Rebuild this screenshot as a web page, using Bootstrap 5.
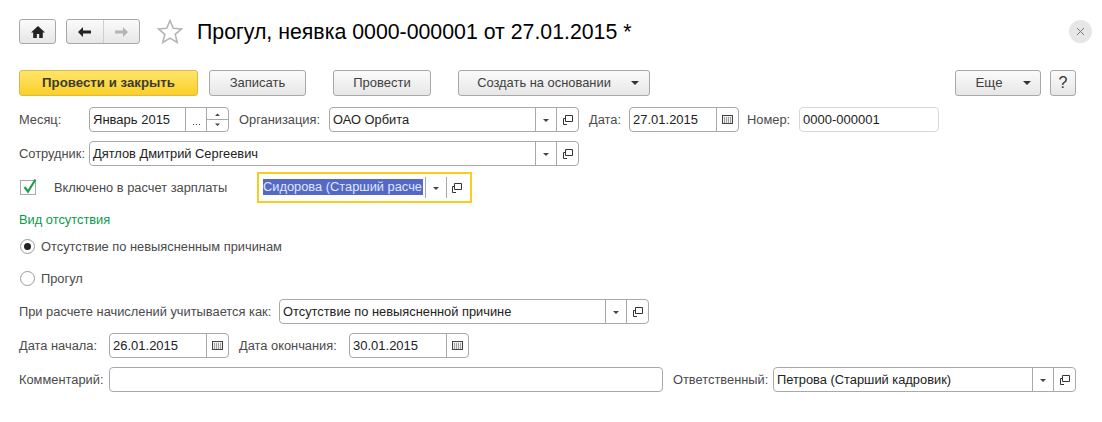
<!DOCTYPE html>
<html lang="ru"><head><meta charset="utf-8"><title>Прогул</title>
<link href="https://cdn.jsdelivr.net/npm/bootstrap@5.3.0/dist/css/bootstrap.min.css" rel="stylesheet">
<style>
html,body{height:100%;overflow:hidden}
body{font-family:"Liberation Sans",Arial,sans-serif;font-size:12.85px;color:#4a4a4a;background:#fff;line-height:15px}
.page{padding:19px 26px 0 19px}
.btn.gb{height:26px;padding:0;font-size:13px;line-height:24px;color:#3f3f3f;border:1px solid #a8a8a8;border-radius:3px;background:linear-gradient(#fbfbfb,#e6e6e6);display:flex;align-items:center;justify-content:center;flex:none}
.btn.gb.ylw{background:linear-gradient(#fde56c,#fbcf26);border-color:#e0b84a;color:#3c3c2c;font-weight:700;font-size:13.25px;width:179px}
.hdr{height:25px;margin-bottom:26px}
.b-home{width:37px;height:25px!important;margin-right:10px}
.navpair{width:74px;height:25px;border:1px solid #a8a8a8;border-radius:3px;background:linear-gradient(#fbfbfb,#e6e6e6);margin-right:17px}
.navpair>div{flex:1;display:flex;align-items:center;justify-content:center}
.navpair>div+div{border-left:1px solid #cfcfcf}
.ttl{font-size:21.3px;line-height:27px;color:#000;margin:0 0 0 14px;font-weight:400;flex:1}
.xclose{width:23px;height:23px;border-radius:50%;background:#e6e6e6;margin:1px -16px 0 0;display:flex;align-items:center;justify-content:center}
.tbar{height:26px;margin-bottom:11px}
.w1{width:97px;margin-left:11px}.w2{width:98px;margin-left:27px}.w3{width:192px;margin-left:27px}.w4{width:86px;margin-left:auto}.w5{width:26px;margin-left:9px}
.btn.gb.w3{font-size:12.9px;padding-left:8px}
.btn.gb.w5{font-size:16px;color:#333}
.caretd{width:0;height:0;border-left:4px solid transparent;border-right:4px solid transparent;border-top:4px solid #333}
.w3 .caretd{margin-left:20px}.w4 .caretd{margin-left:20px}
.btn.gb.w4{padding-left:10px;font-size:13.3px}
.frow{display:flex;align-items:center;height:25px;margin-bottom:9px}
.lbl{flex:none;white-space:nowrap}
.fld{display:flex;flex:none;height:25px;border:1px solid #a9a9a9;border-radius:4px;background:#fff;color:#222}
.fld .form-control{flex:1;min-width:0;border:0;border-radius:0;background:none;padding:0 3px;font-size:12.85px;line-height:23px;height:23px;color:#222;white-space:nowrap;overflow:hidden;box-shadow:none}
.fld .form-control.digits{font-size:13px}
.cell{flex:none;width:21px;border-left:1px solid #a9a9a9;display:flex;align-items:center;justify-content:center;position:relative}
.cell.wide{width:22px}
.tri{width:0;height:0;border-left:3px solid transparent;border-right:3px solid transparent;border-top:3px solid #444;margin-top:1px}
.l1{width:70px}.l2{width:90px;margin-left:10px}.l3{width:40px;margin-left:10px}.l4{width:52px;margin-left:8px}
.f-month{width:140px}.f-org{width:250px}.f-date{width:110px}.f-num{width:140px;border-color:#d8d8d8}
.f-emp{width:490px}
.chkrow{height:31px;margin-top:-3px;margin-bottom:0}
.chk{flex:none;width:16px;height:15px;margin-left:1px;border:1px solid #a9a9a9;background:#fdfdfd;position:relative}
.chk svg{position:absolute;left:1px;top:-3px}
.l-chk{margin-left:18px;width:203px}
.focusbox{width:215px;height:31px;border:2px solid #fbcb1e;display:flex;background:#fff;padding:3px 0 3px 4px;flex:none}
.sel{background:#5468c4;color:#dfe8ff;display:block;width:160px;height:16px;margin-top:2px;line-height:16px;overflow:hidden;white-space:nowrap}
.focusbox .c1{width:21px;margin-left:2px}.focusbox .c2{width:21px}
.grp{color:#0a9a4a;margin-top:9px;height:15px;margin-bottom:11px;line-height:15px}
.rrow{height:16px;display:flex;align-items:center}
.rrow+.rrow{margin-top:16px}
.rdo{flex:none;width:15px;height:15px;margin:0 6px 0 1px;border:1px solid #9a9a9a;border-radius:50%;background:#fff;display:flex;align-items:center;justify-content:center}
.rdo i{display:block;width:7px;height:7px;border-radius:50%;background:#222}
.radios{margin-bottom:13px}
.l5{width:260px}.f-calc{width:370px}
.l6{width:90px}.f-d1{width:120px}.l7{width:110px;margin-left:10px}
.f-cmt{width:554px}.l8{width:100px;margin-left:10px}.f-resp{width:303px}
</style></head><body>
<svg width="0" height="0" class="d-block position-absolute"><defs>
<g id="ic-open"><path d="M2.500.5h7v6h-7zM2.500 3.500h-2v6h3.500" fill="none" stroke="#333"/></g>
<g id="ic-cal"><rect x=".5" y=".5" width="10" height="8" fill="#eee" stroke="#444"/><path d="M2 3h7M2 5h7M2 7h7" stroke="#555" stroke-dasharray="1 1"/></g>
</defs></svg>
<div class="page">
<div class="hdr d-flex align-items-start">
  <button class="btn gb b-home" aria-label="home"><svg width="16" height="14" viewBox="0 0 16 14"><path d="M8 1 1 7.500h2.200V13h3.600V9h2.400v4h3.600V7.500H15z" fill="#222"/></svg></button>
  <div class="navpair d-flex">
    <div><svg width="15" height="12" viewBox="0 0 15 12"><path d="M6 1 1 6l5 5V7.500h8v-3H6z" fill="#222"/></svg></div>
    <div><svg width="15" height="12" viewBox="0 0 15 12"><path d="M9 1l5 5-5 5V7.500H1v-3h8z" fill="#b4b4b4"/></svg></div>
  </div>
  <svg width="26" height="25" viewBox="0 0 26 25" class="flex-none"><path d="M13 1.500l3.300 7.800 8.200.6-6.300 5.400 2 8.200-7.200-4.400-7.200 4.400 2-8.200L1.500 9.900l8.200-.6z" fill="#fff" stroke="#b5b5b5" stroke-width="1.600"/></svg>
  <h1 class="ttl">Прогул, неявка 0000-000001 от 27.01.2015 *</h1>
  <div class="xclose"><svg width="9" height="9" viewBox="0 0 9 9"><path d="M1 1l7 7M8 1 1 8" stroke="#777" stroke-width="1"/></svg></div>
</div>
<div class="tbar d-flex">
  <button class="btn gb ylw">Провести и закрыть</button>
  <button class="btn gb w1">Записать</button>
  <button class="btn gb w2">Провести</button>
  <button class="btn gb w3">Создать на основании<span class="caretd"></span></button>
  <button class="btn gb w4">Еще<span class="caretd"></span></button>
  <button class="btn gb w5">?</button>
</div>
<div class="frow">
  <div class="lbl l1">Месяц:</div>
  <div class="fld f-month"><div class="form-control digits">Январь 2015</div><div class="cell"><svg width="20" height="23" viewBox="0 0 20 23"><path d="M7 16.500h1M10 16.500h1M13 16.500h1" stroke="#444"/></svg></div><div class="cell wide d-block"><svg class="d-block" width="21" height="23" viewBox="0 0 21 23"><path d="M0 11.500h21" stroke="#a9a9a9"/><path d="M8 8h5l-2.500-2.500zM8 15.500h5L10.500 18z" fill="#444"/></svg></div></div>
  <div class="lbl l2">Организация:</div>
  <div class="fld f-org"><div class="form-control">ОАО Орбита</div><div class="cell"><span class="tri"></span></div><div class="cell wide"><svg width="10" height="10" viewBox="0 0 10 10"><use href="#ic-open"/></svg></div></div>
  <div class="lbl l3">Дата:</div>
  <div class="fld f-date"><div class="form-control digits">27.01.2015</div><div class="cell wide"><svg width="11" height="9" viewBox="0 0 11 9"><use href="#ic-cal"/></svg></div></div>
  <div class="lbl l4">Номер:</div>
  <div class="fld f-num"><div class="form-control digits">0000-000001</div></div>
</div>
<div class="frow">
  <div class="lbl l1">Сотрудник:</div>
  <div class="fld f-emp"><div class="form-control">Дятлов Дмитрий Сергеевич</div><div class="cell"><span class="tri"></span></div><div class="cell wide"><svg width="10" height="10" viewBox="0 0 10 10"><use href="#ic-open"/></svg></div></div>
</div>
<div class="frow chkrow">
  <div class="chk"><svg width="16" height="17" viewBox="0 0 16 17"><path d="M2.500 9l3.500 4.500L13.500 1.500" fill="none" stroke="#1e9e4a" stroke-width="2.200"/></svg></div>
  <div class="lbl l-chk">Включено в расчет зарплаты</div>
  <div class="focusbox"><span class="sel">Сидорова (Старший расче</span><div class="cell c1"><span class="tri"></span></div><div class="cell c2"><svg width="10" height="10" viewBox="0 0 10 10"><use href="#ic-open"/></svg></div></div>
</div>
<div class="grp">Вид отсутствия</div>
<div class="radios">
  <div class="rrow"><span class="rdo"><i></i></span>Отсутствие по невыясненным причинам</div>
  <div class="rrow"><span class="rdo"></span>Прогул</div>
</div>
<div class="frow">
  <div class="lbl l5">При расчете начислений учитывается как:</div>
  <div class="fld f-calc"><div class="form-control">Отсутствие по невыясненной причине</div><div class="cell"><span class="tri"></span></div><div class="cell wide"><svg width="10" height="10" viewBox="0 0 10 10"><use href="#ic-open"/></svg></div></div>
</div>
<div class="frow">
  <div class="lbl l6">Дата начала:</div>
  <div class="fld f-d1"><div class="form-control digits">26.01.2015</div><div class="cell wide"><svg width="11" height="9" viewBox="0 0 11 9"><use href="#ic-cal"/></svg></div></div>
  <div class="lbl l7">Дата окончания:</div>
  <div class="fld f-d1"><div class="form-control digits">30.01.2015</div><div class="cell wide"><svg width="11" height="9" viewBox="0 0 11 9"><use href="#ic-cal"/></svg></div></div>
</div>
<div class="frow">
  <div class="lbl l6">Комментарий:</div>
  <div class="fld f-cmt"><div class="form-control"></div></div>
  <div class="lbl l8">Ответственный:</div>
  <div class="fld f-resp"><div class="form-control">Петрова (Старший кадровик)</div><div class="cell"><span class="tri"></span></div><div class="cell wide"><svg width="10" height="10" viewBox="0 0 10 10"><use href="#ic-open"/></svg></div></div>
</div>
</div>
<script src="https://cdn.jsdelivr.net/npm/bootstrap@5.3.0/dist/js/bootstrap.bundle.min.js"></script>
</body></html>
